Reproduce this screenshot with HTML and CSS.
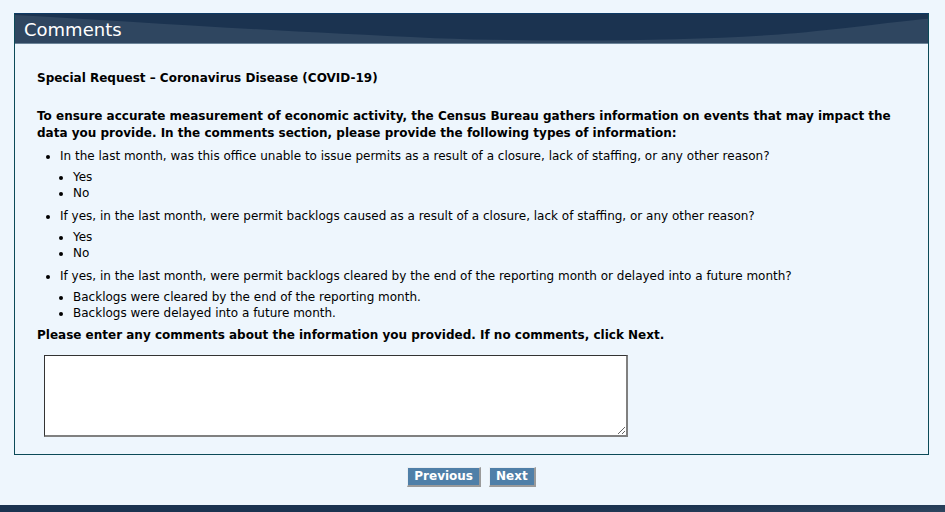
FILE: index.html
```html
<!DOCTYPE html>
<html lang="en">
<head>
    <meta charset="UTF-8">
    <meta name="viewport" content="width=device-width, initial-scale=1.0">
    <title>Comments</title>
    <link rel="stylesheet" href="styles.css">
</head>
<body>
    <div class="page">
        <div class="panel">
            <div class="panel-header">
                <svg class="header-bg" viewBox="0 0 913 30" preserveAspectRatio="none">
                    <rect width="913" height="30" fill="#1b3350"/>
                    <path d="M0,1 C120,8 260,18 420,25 C560,30 690,27 780,20 C840,14 880,8 913,5 L913,30 L0,30 Z" fill="#2f4660"/>
                </svg>
                <h2>Comments</h2>
            </div>
            <div class="panel-body">
                <p class="title">Special Request &ndash; Coronavirus Disease (COVID-19)</p>
                <p class="intro">To ensure accurate measurement of economic activity, the Census Bureau gathers information on events that may impact the data you provide. In the comments section, please provide the following types of information:</p>
                <ul class="questions">
                    <li>In the last month, was this office unable to issue permits as a result of a closure, lack of staffing, or any other reason?
                        <ul>
                            <li>Yes</li>
                            <li>No</li>
                        </ul>
                    </li>
                    <li>If yes, in the last month, were permit backlogs caused as a result of a closure, lack of staffing, or any other reason?
                        <ul>
                            <li>Yes</li>
                            <li>No</li>
                        </ul>
                    </li>
                    <li>If yes, in the last month, were permit backlogs cleared by the end of the reporting month or delayed into a future month?
                        <ul>
                            <li>Backlogs were cleared by the end of the reporting month.</li>
                            <li>Backlogs were delayed into a future month.</li>
                        </ul>
                    </li>
                </ul>
                <p class="prompt">Please enter any comments about the information you provided. If no comments, click Next.</p>
                <textarea class="comments" name="comments"></textarea>
            </div>
        </div>
        <div class="buttons">
            <input type="button" class="btn" value="Previous">
            <input type="button" class="btn" value="Next">
        </div>
    </div>
    <div class="footer"></div>
</body>
</html>
```

FILE: styles.css
```css
body {
    margin: 0;
    background-color: #eef6fd;
    font-family: "DejaVu Sans", Verdana, sans-serif;
    font-size: 12px;
    color: #000;
}

.page {
    padding: 13px 16px 0 14px;
}

.panel {
    border: 1px solid #0c4a58;
    border-top-color: #0d3a66;
    background-color: #eef6fd;
}

.panel-header {
    position: relative;
    height: 29px;
    border-bottom: 1px solid #6c8499;
    overflow: hidden;
}

.header-bg {
    position: absolute;
    left: 0;
    top: 0;
    width: 100%;
    height: 100%;
}

.panel-header h2 {
    position: relative;
    margin: 0;
    padding: 5px 0 0 9px;
    font-size: 18px;
    font-weight: normal;
    color: #fff;
    line-height: 22px;
}

.panel-body {
    padding: 26px 22px 17px 22px;
}

.panel-body p {
    margin: 0;
    line-height: 17px;
}

.title {
    font-weight: bold;
}

.intro {
    font-weight: bold;
    margin-top: 21px !important;
}

.questions {
    margin: 3px 0 0 0;
    padding-left: 23px;
}

.questions li {
    line-height: 16px;
    list-style-type: disc;
}

.questions > li {
    margin-top: 6px;
}

.questions > li + li {
    margin-top: 7px;
}

.questions ul {
    margin: 5px 0 0 0;
    padding-left: 13px;
}

.prompt {
    font-weight: bold;
    margin-top: 6px !important;
}

.comments {
    display: block;
    box-sizing: border-box;
    width: 584px;
    height: 82px;
    margin: 11px 0 0 7px;
    background-color: #fff;
    border-style: solid;
    border-width: 1px 2px 2px 1px;
    border-color: #333 #808080 #808080 #333;
    resize: both;
}

.buttons {
    display: flex;
    justify-content: center;
    gap: 8px;
    padding: 12px 0 18px 0;
}

.btn {
    font-family: "DejaVu Sans", Verdana, sans-serif;
    font-size: 12px;
    font-weight: bold;
    color: #fff;
    background-color: #4f7fa8;
    border-style: solid;
    border-width: 1px 2px 2px 1px;
    border-color: #e8eef4 #9a9a9a #9a9a9a #e8eef4;
    padding: 1px 6px 2px 6px;
    height: 20px;
    cursor: pointer;
}

.footer {
    height: 8px;
    background: linear-gradient(178deg, #1b3350 60%, #2f4660 100%);
}
```
